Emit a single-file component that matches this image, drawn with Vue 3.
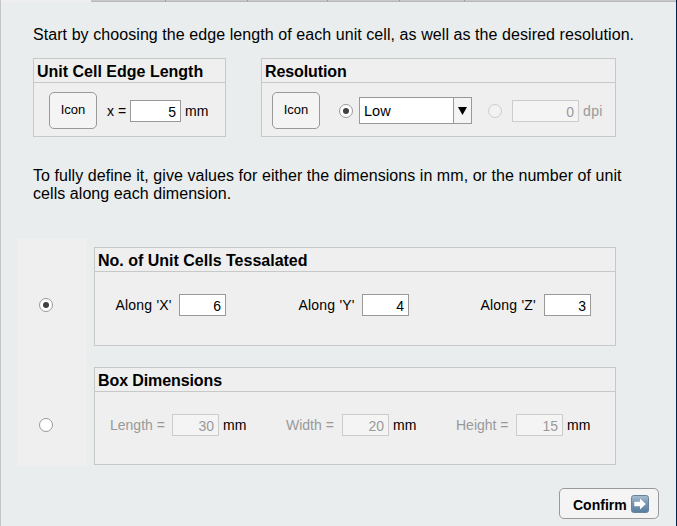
<script setup>
import { ref } from 'vue'

const mode = ref('cells')
const tabs = ['a', 'b', 'c', 'd', 'e', 'f', 'g']
const cells = [
  { axis: 'X', value: 6 },
  { axis: 'Y', value: 4 },
  { axis: 'Z', value: 3 },
]
const box = [
  { name: 'Length', value: 30 },
  { name: 'Width', value: 20 },
  { name: 'Height', value: 15 },
]
</script>

<template>
  <main class="window">
    <div class="tabs"><i v-for="t in tabs" :key="t" :class="['tab', 'tab-' + t]"></i></div>

    <p class="intro"><span class="line l1">Start by choosing the edge length of each unit cell, as well as the desired resolution.</span></p>

    <div class="top">
      <section class="panel edge">
        <h2><span class="t1">Unit Cell Edge Length</span></h2>
        <div class="body">
          <button class="icon-btn">Icon</button>
          <span class="label eq">x =</span>
          <div class="field wide">5</div>
          <span class="unit">mm</span>
        </div>
      </section>
      <section class="panel resolution">
        <h2><span class="t2">Resolution</span></h2>
        <div class="body">
          <button class="icon-btn">Icon</button>
          <span class="radio on r1"></span>
          <div class="select">
            <span class="choice">Low</span>
            <span class="arrow"><svg width="9" height="8" viewBox="0 0 9 8"><path d="M0 0h9L4.5 8z" /></svg></span>
          </div>
          <span class="radio off r2"></span>
          <div class="field dpi off">0</div>
          <span class="unit muted dots">dpi</span>
        </div>
      </section>
    </div>

    <p class="explain">
      <span class="line l2">To fully define it, give values for either the dimensions in mm, or the number of unit</span>
      <span class="line l3">cells along each dimension.</span>
    </p>

    <div class="options">
      <div class="radios">
        <span :class="['radio', { on: mode === 'cells' }]" @click="mode = 'cells'"></span>
        <span :class="['radio', { on: mode === 'box' }]" @click="mode = 'box'"></span>
      </div>
      <div class="groups">
        <section class="panel cells">
          <h2><span class="t3">No. of Unit Cells Tessalated</span></h2>
          <div class="body">
            <div v-for="c in cells" :key="c.axis" class="cell">
              <span class="label">Along '{{ c.axis }}'</span>
              <div class="field">{{ c.value }}</div>
            </div>
          </div>
        </section>
        <section class="panel box">
          <h2><span class="t4">Box Dimensions</span></h2>
          <div class="body">
            <div v-for="b in box" :key="b.name" :class="['dim', b.name.toLowerCase()]">
              <span class="label muted">{{ b.name }} =</span>
              <div class="field off">{{ b.value }}</div>
              <span class="unit">mm</span>
            </div>
          </div>
        </section>
      </div>
    </div>

    <footer>
      <button class="confirm">
        <span class="caption">Confirm</span>
        <svg class="go" width="18" height="18" viewBox="0 0 18 18">
          <defs>
            <linearGradient id="go-fill" x1="0" y1="0" x2="0" y2="1">
              <stop offset="0" stop-color="#a9bfd0" />
              <stop offset="0.45" stop-color="#7997b3" />
              <stop offset="1" stop-color="#587e9f" />
            </linearGradient>
          </defs>
          <rect x="0.5" y="0.5" width="17" height="17" rx="2.2" fill="url(#go-fill)" stroke="#68849d" />
          <path d="M3.3 6.7H9V3.6L14.8 9L9 14.4V11.3H3.3z" fill="#fff" />
        </svg>
      </button>
    </footer>
  </main>
</template>

<style>
body {
  margin: 0;
  overflow: hidden;
}
</style>

<style scoped>
* {
  box-sizing: border-box;
}
.window {
  width: 677px;
  height: 526px;
  background: #e9eded;
  border-left: 1px solid #c5c5c5;
  border-right: 1px solid #001f48;
  font-family: "Liberation Sans", Arial, sans-serif;
  font-size: 14px;
  color: #000;
}
.tabs {
  display: flex;
  height: 2px;
}
.tab {
  height: 2px;
  background: #c9c9c9;
  border-right: 1px solid #999;
  border-bottom: 1px solid #b9b9b9;
}
.tab-a { width: 90px; background: #efefef; border: 0; }
.tab-b { width: 75px; }
.tab-c { width: 82px; }
.tab-d { width: 80px; }
.tab-e { width: 72px; }
.tab-f { width: 65px; }
.tab-g { flex: 1; border-right: 0; }
p {
  margin: 0;
  padding-left: 32px;
  font-size: 16px;
  line-height: 18px;
}
.line {
  display: block;
  width: max-content;
  white-space: nowrap;
}
.l1 { letter-spacing: 0.07px; }
.l2, .l3 { letter-spacing: 0.06px; }
.intro {
  padding-top: 24px;
}
.top {
  display: flex;
  gap: 35px;
  padding: 14px 0 0 32px;
}
.panel {
  display: flex;
  flex-direction: column;
  background: #efefef;
  border: 1px solid #c7c9c9;
}
.edge { width: 193px; height: 79px; }
.resolution { width: 355px; height: 79px; }
h2 {
  height: 24px;
  flex: none;
  margin: 0;
  padding-left: 3px;
  border-bottom: 1px solid #c7c9c9;
  font-size: 16px;
  line-height: 25px;
  white-space: nowrap;
}
h2 span {
  display: inline-block;
}
.t2, .t4 { letter-spacing: -0.1px; }
.body {
  display: flex;
  flex: 1;
  align-items: center;
  white-space: nowrap;
}
.edge .body { padding: 3px 0 0 15px; }
.resolution .body { padding: 3px 0 0 10px; }
button {
  background: #f4f4f4;
  border: 1px solid #999;
  padding: 0;
  color: #000;
  font-family: inherit;
}
.icon-btn {
  width: 48px;
  height: 37px;
  margin: 0 0 2px;
  border-radius: 5px;
  font-size: 13px;
  padding-bottom: 2px;
}
.label,
.unit {
  font-size: 14px;
  line-height: 16px;
}
.eq { width: 23px; margin-left: 10px; }
.field {
  width: 47px;
  height: 22px;
  flex: none;
  padding: 2px 4px 0 0;
  border: 1px solid #999;
  background: #fff;
  text-align: right;
  font-size: 14px;
  line-height: 19px;
}
.wide { width: 51px; }
.dpi { width: 67px; margin-left: 10px; }
.unit { margin-left: 4px; }
.dots { letter-spacing: 0.4px; }
.muted { color: #999; }
.field.off {
  background: #f4f4f4;
  border-color: #ccc;
  color: #999;
}
.radio {
  display: flex;
  align-items: center;
  justify-content: center;
  width: 14px;
  height: 14px;
  flex: none;
  border: 1px solid #999;
  border-radius: 50%;
  background: #fff;
}
.radio.on::after {
  content: "";
  width: 6px;
  height: 6px;
  border-radius: 50%;
  background: #404040;
}
.radio.off { border-color: #ccc; background: #f2f2f2; }
.r1 { margin-left: 19px; }
.r2 { margin-left: 16px; }
.select {
  display: flex;
  width: 113px;
  height: 27px;
  margin: 0 0 1px 6px;
  border: 1px solid #999;
  background: #fff;
}
.choice {
  flex: 1;
  padding-left: 4px;
  font-size: 14.5px;
  line-height: 26px;
}
.arrow {
  display: flex;
  align-items: center;
  justify-content: center;
  width: 18px;
  border-left: 1px solid #999;
  background: #f4f4f4;
}
.explain {
  padding-top: 30px;
}
.options {
  display: flex;
  gap: 7px;
  padding: 36px 0 0 16px;
}
.radios {
  display: flex;
  flex-direction: column;
  gap: 106px;
  width: 70px;
  height: 227px;
  padding: 59px 0 0 22px;
  background: #efefef;
}
.groups {
  display: flex;
  flex-direction: column;
  gap: 21px;
  width: 522px;
  padding-top: 8px;
}
.cells { height: 99px; }
.cells .body {
  display: grid;
  grid-template-columns: 183px 182px 112px;
  align-items: start;
  padding: 22px 0 0 20px;
}
.cell {
  display: flex;
  align-items: center;
}
.cell .label { width: 64px; padding-left: 0.5px; letter-spacing: 0.2px; }
.box { height: 98px; }
.box .body { align-items: flex-start; padding: 22px 0 0 15px; }
.dim { display: flex; align-items: center; }
.length { width: 176px; }
.width { width: 170px; }
.length .label { width: 62px; }
.width .label { width: 56px; }
.height .label { width: 60px; }
footer {
  display: flex;
  justify-content: flex-end;
  padding: 22px 17px 0 0;
}
.confirm {
  display: flex;
  align-items: center;
  gap: 4px;
  width: 100px;
  height: 31px;
  padding: 1px 0 0 13px;
  border-radius: 5px;
  font-weight: bold;
  font-size: 14px;
}
.caption { width: 54px; padding-top: 2px; white-space: nowrap; text-align: left; }
.go { flex: none; }
</style>
